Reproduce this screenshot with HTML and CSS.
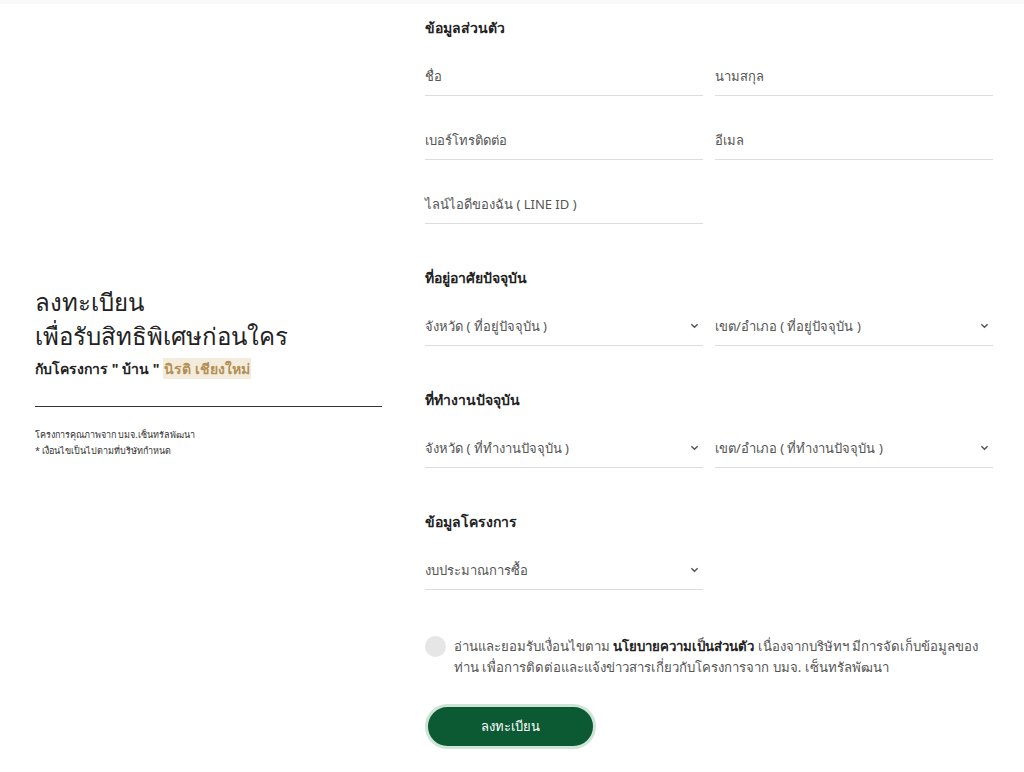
FILE: index.html
```html
<!DOCTYPE html>
<html lang="th">

<head>
    <meta charset="UTF-8">
    <meta name="viewport"
          content="width=device-width, initial-scale=1.0">
    <title>ลงทะเบียน</title>
    <link rel="stylesheet" href="styles.css">
</head>

<body>
    <div class="topbar"></div>
    <main class="page">
        <section class="intro">
            <h1>ลงทะเบียน<br>เพื่อรับสิทธิพิเศษก่อนใคร</h1>
            <p class="project">กับโครงการ " บ้าน " <span class="mark">นิรติ เชียงใหม่</span></p>
            <hr class="rule">
            <p class="note">โครงการคุณภาพจาก บมจ.เซ็นทรัลพัฒนา</p>
            <p class="note">* เงื่อนไขเป็นไปตามที่บริษัทกำหนด</p>
        </section>

        <form class="form">
            <div class="group">
                <h2>ข้อมูลส่วนตัว</h2>
                <div class="row">
                    <div class="field">ชื่อ</div>
                    <div class="field">นามสกุล</div>
                    <div class="field">เบอร์โทรติดต่อ</div>
                    <div class="field">อีเมล</div>
                    <div class="field">ไลน์ไอดีของฉัน ( LINE ID )</div>
                </div>
            </div>

            <div class="group">
                <h2>ที่อยู่อาศัยปัจจุบัน</h2>
                <div class="row">
                    <div class="field select">จังหวัด ( ที่อยู่ปัจจุบัน )
                        <svg viewBox="0 0 10 6"><polyline points="1.5,1 5,4.5 8.5,1"/></svg>
                    </div>
                    <div class="field select">เขต/อำเภอ ( ที่อยู่ปัจจุบัน )
                        <svg viewBox="0 0 10 6"><polyline points="1.5,1 5,4.5 8.5,1"/></svg>
                    </div>
                </div>
            </div>

            <div class="group">
                <h2>ที่ทำงานปัจจุบัน</h2>
                <div class="row">
                    <div class="field select">จังหวัด ( ที่ทำงานปัจจุบัน )
                        <svg viewBox="0 0 10 6"><polyline points="1.5,1 5,4.5 8.5,1"/></svg>
                    </div>
                    <div class="field select">เขต/อำเภอ ( ที่ทำงานปัจจุบัน )
                        <svg viewBox="0 0 10 6"><polyline points="1.5,1 5,4.5 8.5,1"/></svg>
                    </div>
                </div>
            </div>

            <div class="group">
                <h2>ข้อมูลโครงการ</h2>
                <div class="row">
                    <div class="field select">งบประมาณการซื้อ
                        <svg viewBox="0 0 10 6"><polyline points="1.5,1 5,4.5 8.5,1"/></svg>
                    </div>
                </div>
            </div>

            <label class="consent">
                <span class="check"></span>
                <span class="consent-text">อ่านและยอมรับเงื่อนไขตาม <strong>นโยบายความเป็นส่วนตัว</strong> เนื่องจากบริษัทฯ มีการจัดเก็บข้อมูลของท่าน เพื่อการติดต่อและแจ้งข่าวสารเกี่ยวกับโครงการจาก บมจ. เซ็นทรัลพัฒนา</span>
            </label>

            <button type="button" class="submit">ลงทะเบียน</button>
        </form>
    </main>
</body>

</html>
```

FILE: styles.css
```css
* {
    padding: 0;
    margin: 0;
    box-sizing: border-box;
}

body {
    font-family: "Noto Sans", "Open Sans", sans-serif;
    color: #333;
    background: #fff;
}

.topbar {
    height: 4px;
    background-color: #f9f9f9;
}

.page {
    display: grid;
    grid-template-columns: 347px 568px;
    column-gap: 43px;
    align-items: center;
    padding: 0 31px 0 35px;
}

/* left column */

.intro {
    padding-bottom: 34px;
}

.intro h1 {
    font-size: 24px;
    font-weight: 300;
    line-height: 34px;
    color: #222;
}

.project {
    font-size: 14px;
    font-weight: 700;
    line-height: 22px;
    margin-top: 5px;
    color: #222;
}

.mark {
    background-color: #f3ecdc;
    color: #b39056;
    padding: 1px 1px;
}

.rule {
    border: 0;
    border-top: 1px solid #333;
    margin: 26px 0 20px;
}

.note {
    font-size: 9px;
    line-height: 16px;
    color: #333;
}

/* right column */

.form {
    padding-top: 14px;
    padding-bottom: 24px;
}

.group {
    margin-bottom: 44px;
}

.group h2 {
    font-size: 14px;
    font-weight: 700;
    line-height: 20px;
    color: #222;
    margin-bottom: 18px;
}

.row {
    display: grid;
    grid-template-columns: 1fr 1fr;
    column-gap: 12px;
    row-gap: 24px;
}

.field {
    font-size: 13px;
    line-height: 20px;
    color: #555;
    padding: 10px 0 9px;
    border-bottom: 1px solid #ddd;
    display: flex;
    justify-content: space-between;
    align-items: center;
}

.field svg {
    width: 9px;
    height: 6px;
    margin-right: 4px;
    fill: none;
    stroke: #555;
    stroke-width: 1.6;
}

.consent {
    display: flex;
    gap: 8px;
    padding-top: 2px;
    font-size: 13.2px;
    line-height: 21px;
    color: #555;
}

.consent strong {
    color: #222;
}

.check {
    flex: none;
    width: 21px;
    height: 21px;
    border-radius: 50%;
    background-color: #e6e6e6;
}

.submit {
    margin-top: 26px;
    width: 171px;
    height: 45px;
    border-radius: 23px;
    border: 3px solid #cde4d6;
    background-color: #0b5a34;
    color: #fff;
    font-family: inherit;
    font-size: 13px;
    font-weight: 400;
}
```
